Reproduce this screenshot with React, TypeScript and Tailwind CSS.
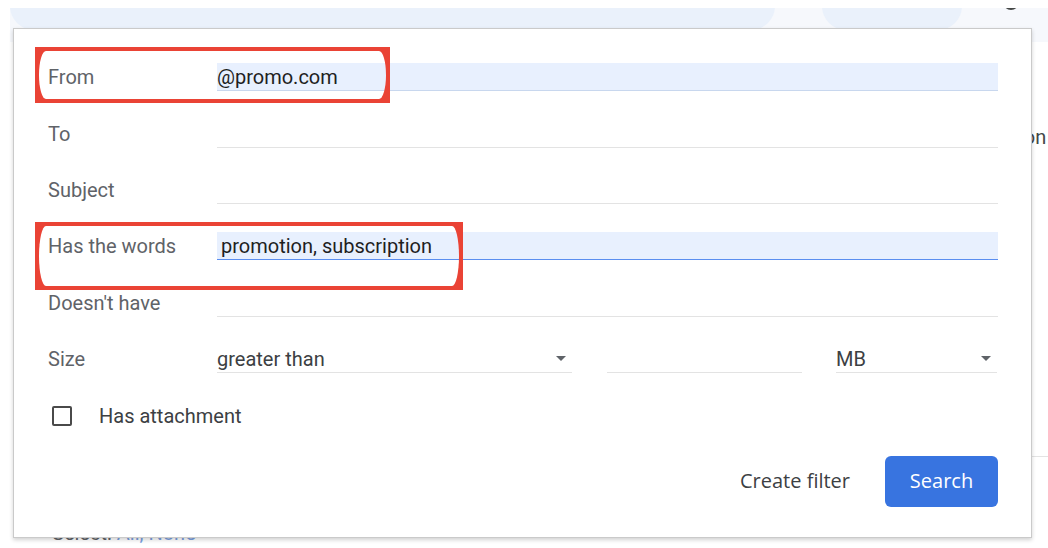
import React from "react";

const textRows = [
  { label: "From", value: "@promo.com", active: "filled" },
  { label: "To", value: "", active: "" },
  { label: "Subject", value: "", active: "" },
  { label: "Has the words", value: "promotion, subscription", active: "focused" },
  { label: "Doesn't have", value: "", active: "" },
];

function Caret() {
  return (
    <span className="h-0 w-0 border-x-[5px] border-t-[5px] border-x-transparent border-t-[#5f6368]" />
  );
}

function Callout({ className }: { className: string }) {
  return (
    <div
      className={`pointer-events-none absolute overflow-hidden border-4 border-[#ea4335] ${className}`}
    >
      <div className="h-full w-full rounded-[7px/50%] shadow-[0_0_0_8px_#ea4335]" />
    </div>
  );
}

function FieldRow({
  label,
  value,
  active,
}: {
  label: string;
  value: string;
  active: string;
}) {
  let field = "border-[#e3e3e3]";
  if (active === "filled") field = "bg-[#e8f0fe] border-[#c8d7ee]";
  if (active === "focused") field = "bg-[#e8f0fe] border-[#5a8ef0] pl-[4px]";
  return (
    <div className="flex h-[56.4px] items-center">
      <div className="w-[169px] text-[#5f6368]">{label}</div>
      <div className={`h-[28px] flex-1 border-b leading-[28px] text-[#1f1f1f] ${field}`}>
        {value}
      </div>
    </div>
  );
}

export default function App() {
  return (
    <div
      className="relative h-[548px] w-[1048px] overflow-hidden bg-white text-[20px]"
      style={{ fontFamily: "Roboto, 'Liberation Sans', sans-serif" }}
    >
      {/* page behind the popup */}
      <div className="h-2" />
      <div className="ml-[10px] flex h-[34px] overflow-hidden bg-[#f6f8fc]">
        <div className="-mt-[26px] h-[48px] w-[765px] shrink-0 rounded-full bg-[#eaf1fb]" />
        <div className="-mt-[26px] ml-[47px] h-[48px] w-[140px] shrink-0 rounded-full bg-[#eaf1fb]" />
        <div className="-mt-[14px] ml-[41px] h-[16px] w-[16px] shrink-0 rounded-full bg-[#444746]" />
      </div>
      <div className="whitespace-nowrap pl-[964px] pt-[81px] leading-[28px] text-[#444746]">
        Selection
      </div>
      <div className="ml-[1000px] h-[306px] border-b border-[#e3e3e3]" />
      <div className="mt-[62px] whitespace-nowrap pl-[52px] leading-[28px] text-[#5f6368]">
        Select: <span className="text-[#7c9fe0]">All, None</span>
      </div>

      {/* search options popup */}
      <div className="absolute left-[13px] top-[28px] h-[510px] w-[1019px] border border-[#cacaca] bg-white pl-[34px] pr-[33px] pt-5 shadow-[0_2px_4px_rgba(0,0,0,0.18)]">
        {textRows.map((r) => (
          <FieldRow key={r.label} {...r} />
        ))}

        <div className="flex h-[56.4px] items-center">
          <div className="w-[169px] text-[#5f6368]">Size</div>
          <div className="flex h-[28px] w-[355px] items-center justify-between border-b border-[#e3e3e3] pr-[6px] leading-[28px] text-[#3c4043]">
            greater than
            <Caret />
          </div>
          <div className="ml-[35px] h-[28px] w-[195px] border-b border-[#e3e3e3]" />
          <div className="ml-[34px] flex h-[28px] w-[161px] items-center justify-between border-b border-[#e3e3e3] pr-[6px] leading-[28px] text-[#3c4043]">
            MB
            <Caret />
          </div>
        </div>

        <div className="flex h-[56.4px] items-center">
          <span className="ml-[4px] h-5 w-5 rounded-[2px] border-2 border-[#4a4a4a]" />
          <span className="ml-[27px] text-[#3c4043]">Has attachment</span>
        </div>

        <div
          className="mt-[12px] flex items-center justify-end"
          style={{ fontFamily: "'Open Sans', Roboto, sans-serif" }}
        >
          <button className="mr-[35px] text-[#3c4043]">Create filter</button>
          <button className="h-[51px] w-[113px] rounded-[6px] bg-[#3874e0] text-white">
            Search
          </button>
        </div>

        <Callout className="left-[21px] top-[18px] h-[56px] w-[355px]" />
        <Callout className="left-[21px] top-[193px] h-[68px] w-[428px]" />
      </div>
    </div>
  );
}
